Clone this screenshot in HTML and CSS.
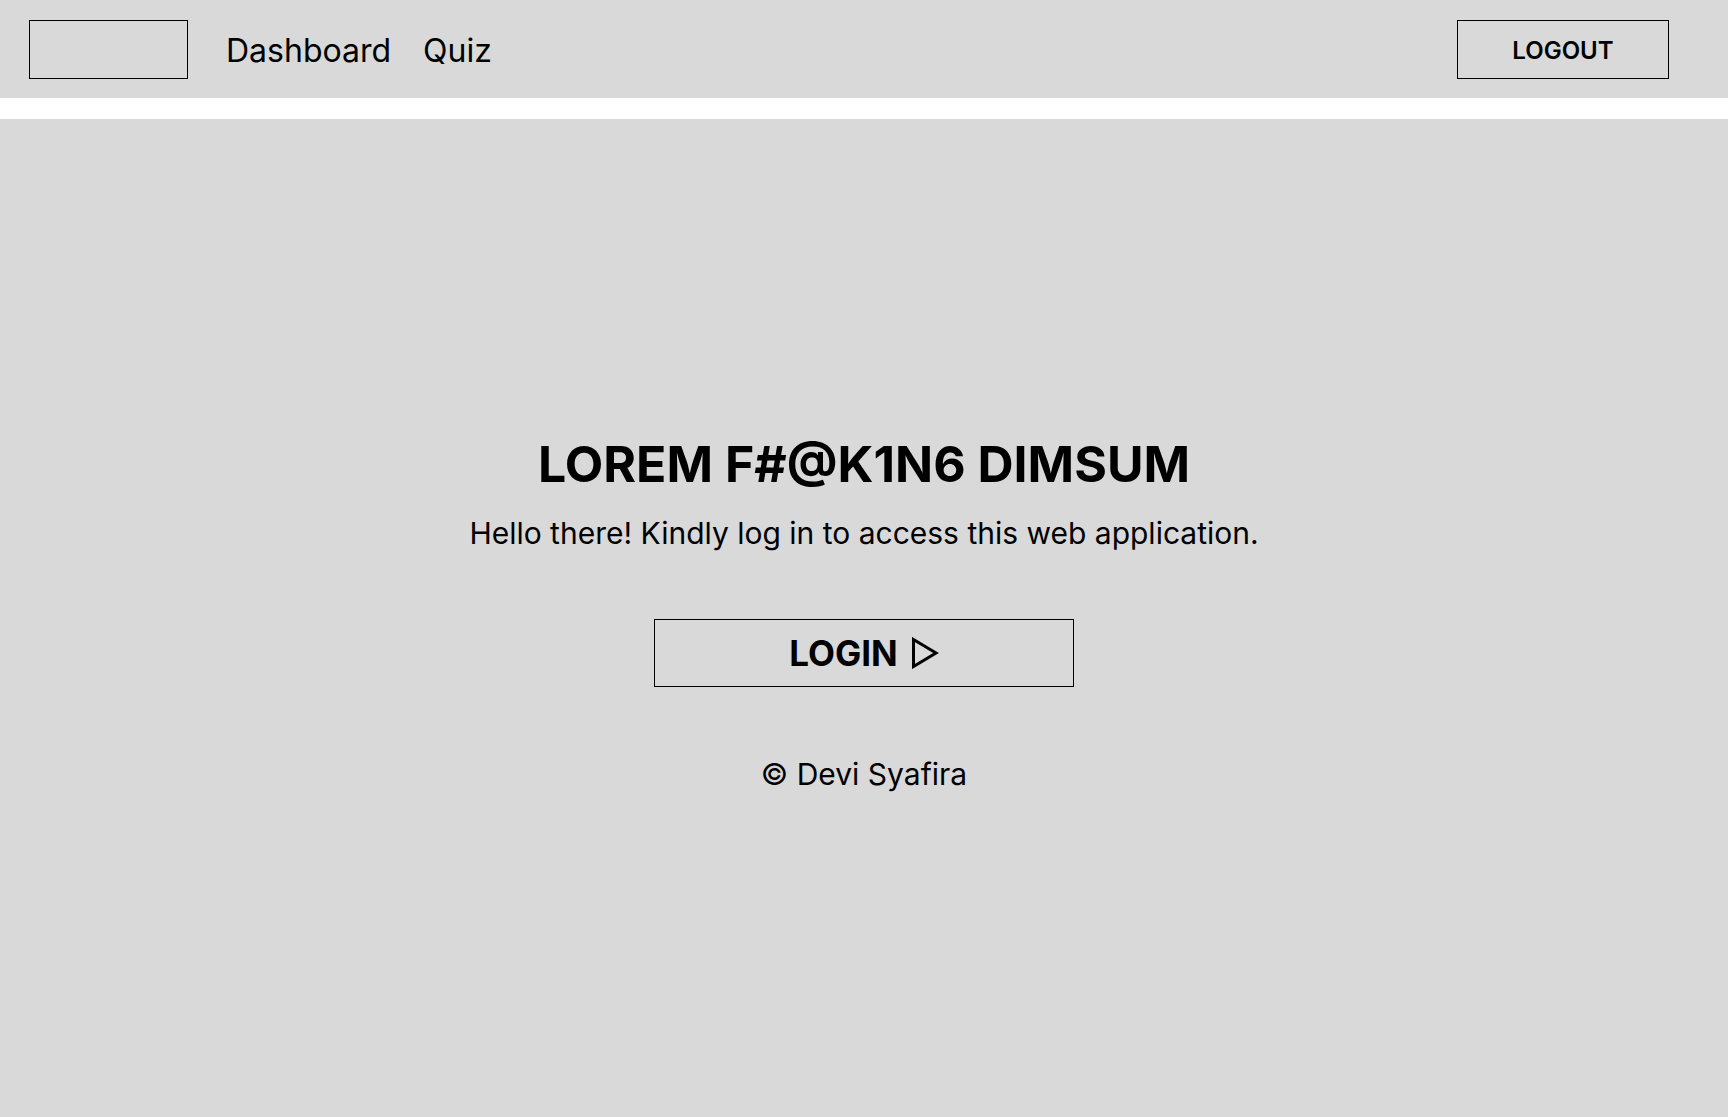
FILE: index.html
```html
<!DOCTYPE html>
<html lang="en">
<head>
<meta charset="utf-8">
<title>Login</title>
<link rel="stylesheet" href="styles.css">
</head>
<body>
<header class="topbar">
  <div class="logo"></div>
  <nav class="nav">
    <a class="nav-link" href="#">Dashboard</a>
    <a class="nav-link" href="#">Quiz</a>
  </nav>
  <button class="logout">LOGOUT</button>
</header>
<div class="spacer"></div>
<main class="main">
  <h1 class="title">LOREM F#@K1N6 DIMSUM</h1>
  <p class="subtitle">Hello there! Kindly log in to access this web application.</p>
  <button class="login">LOGIN
    <svg class="login-icon" width="28" height="32" viewBox="0 0 28 32"><path d="M2.5 2.5 L25 16 L2.5 29.5 Z" fill="none" stroke="#000" stroke-width="3" stroke-linejoin="miter"/></svg>
  </button>
  <p class="copy">© Devi Syafira</p>
</main>
</body>
</html>
```
FILE: styles.css
```css
* { box-sizing: border-box; }
html, body { margin: 0; padding: 0; }
body {
  font-family: Inter, "Noto Sans", sans-serif;
  color: #000;
  background: #fff;
}
.topbar {
  height: 98px;
  background: #d9d9d9;
  display: flex;
  align-items: center;
  padding: 0 59px 0 29px;
}
.logo {
  width: 159px;
  height: 59px;
  border: 1px solid #000;
}
.nav {
  display: flex;
  gap: 32px;
  margin-left: 38px;
  padding-top: 3px;
}
.nav-link {
  font-size: 32px;
  color: #000;
  text-decoration: none;
  line-height: 40px;
}
.logout {
  margin-left: auto;
  width: 212px;
  height: 59px;
  border: 1px solid #000;
  background: transparent;
  font-family: Inter, "Noto Sans", sans-serif;
  font-size: 24px;
  font-weight: 600;
  color: #000;
  padding: 2px 0 0;
  display: flex;
  align-items: center;
  justify-content: center;
}
.spacer {
  height: 21px;
  background: #fff;
}
.main {
  height: 998px;
  background: #d9d9d9;
  display: flex;
  flex-direction: column;
  align-items: center;
  justify-content: center;
  padding-bottom: 10px;
}
.title {
  margin: 0;
  font-size: 50px;
  font-weight: 700;
  line-height: 60px;
}
.subtitle {
  margin: 21px 0 0;
  font-size: 30px;
  line-height: 36px;
}
.login {
  margin-top: 68px;
  width: 420px;
  height: 68px;
  border: 1px solid #000;
  background: transparent;
  font-family: Inter, "Noto Sans", sans-serif;
  font-size: 35px;
  font-weight: 700;
  color: #000;
  display: flex;
  align-items: center;
  justify-content: center;
  gap: 13px;
  padding: 0;
}
.login-icon { display: block; margin-top: -1px; }
.copy {
  margin: 69px 0 0;
  font-size: 30px;
  line-height: 36px;
}
```
